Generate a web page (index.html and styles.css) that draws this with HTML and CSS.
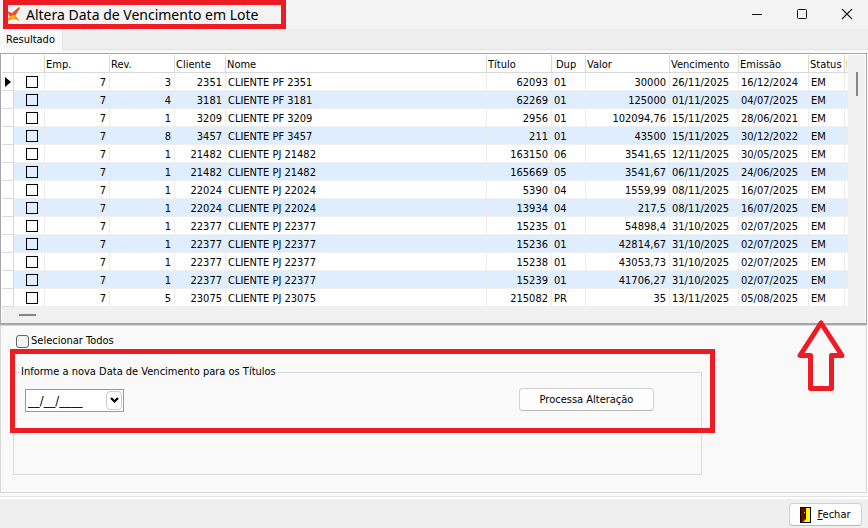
FILE: index.html
```html
<!DOCTYPE html>
<html lang="pt-BR">
<head>
    <meta charset="UTF-8">
    <meta name="viewport" content="width=device-width, initial-scale=1.0">
    <title>Altera Data de Vencimento em Lote</title>
    <link rel="stylesheet" href="styles.css">
</head>
<body>
    <header class="titlebar">
        <svg class="logo" width="15" height="16" viewBox="0 0 15 16" aria-hidden="true">
            <path d="M13 0L14 1L9 9L4 10L1 4L6 6Z" fill="#f04a1d"/>
            <path d="M0 15L4 9L9 8L14 14L8 12L4 13Z" fill="#f7941d"/>
            <path d="M4 9L9 8L9 11L5 12Z" fill="#fdb515"/>
        </svg>
        <h1>Altera Data de Vencimento em Lote</h1>
        <div class="window-buttons">
            <button type="button" aria-label="Minimizar">
                <svg width="12" height="12" viewBox="0 0 12 12"><path d="M1 5.500H11" stroke="#111"/></svg>
            </button>
            <button type="button" aria-label="Maximizar">
                <svg width="12" height="12" viewBox="0 0 12 12"><rect x="1.5" y="0.5" width="9" height="9" rx="1" fill="none" stroke="#111"/></svg>
            </button>
            <button type="button" aria-label="Fechar janela">
                <svg width="12" height="12" viewBox="0 0 12 12"><path d="M1 0L11 10M11 0L1 10" stroke="#111" stroke-width="1.1"/></svg>
            </button>
        </div>
        <div class="mark mark-title"></div>
    </header>

    <nav class="tabs">
        <button type="button" class="tab">Resultado</button>
    </nav>

    <main>
        <section class="grid">
            <div class="grid-body">
                <table>
                    <colgroup>
                        <col class="c-mark"><col class="c-check"><col class="c-num"><col class="c-num"><col class="c-cliente"><col><col class="c-num"><col class="c-dup"><col class="c-valor"><col class="c-venc"><col class="c-emissao"><col class="c-status"><col class="c-last">
                    </colgroup>
                    <thead>
                        <tr><th></th><th></th><th>Emp.</th><th>Rev.</th><th>Cliente</th><th>Nome</th><th>Título</th><th class="th-dup">Dup</th><th>Valor</th><th>Vencimento</th><th>Emissão</th><th>Status</th><th class="cut"></th></tr>
                    </thead>
                    <tbody id="rows"></tbody>
                </table>
                <div class="scroll-v"><div class="thumb"></div></div>
            </div>
            <div class="scroll-h"><div class="thumb"></div></div>
        </section>

        <section class="panel">
            <label class="select-all"><input type="checkbox">Selecionar Todos</label>
            <div class="group">
                <fieldset>
                    <legend>Informe a nova Data de Vencimento para os Títulos</legend>
                    <div class="date-box">
                        <input type="text" value="__/__/____" aria-label="Nova data de vencimento">
                        <button type="button" aria-label="Abrir calendário">
                            <svg width="9" height="7" viewBox="0 0 9 7"><path d="M1 1L4.500 4.500L8 1" fill="none" stroke="#000" stroke-width="2.200"/></svg>
                        </button>
                    </div>
                    <button type="button" class="btn btn-process">Processa Alteração</button>
                </fieldset>
                <div class="mark mark-group"></div>
            </div>
            <svg class="arrow" width="50" height="72" viewBox="0 0 50 72" aria-hidden="true">
                <path d="M25 3L4 35.500H14.500V68.500H35.500V35.500H46Z" fill="none" stroke="#ed1c24" stroke-width="5" stroke-linejoin="round"/>
            </svg>
        </section>
    </main>

    <footer>
        <button type="button" class="btn btn-close">
            <svg width="11" height="16" viewBox="0 0 11 16" aria-hidden="true">
                <rect x=".5" y=".5" width="10" height="15" fill="#ff0" stroke="#000"/>
                <path d="M1 1H5V12L2 15H1Z" fill="#800000"/>
                <path d="M5.500 1V12L2 15.500M3 5.500H5" fill="none" stroke="#000"/>
                <path d="M4 5h1v1H4z" fill="#ff0"/>
            </svg>
            <span><u>F</u>echar</span>
        </button>
    </footer>

    <script>
        const rows = [
            [7, 3, 2351, "CLIENTE PF 2351", 62093, "01", "30000", "26/11/2025", "16/12/2024", "EM"],
            [7, 4, 3181, "CLIENTE PF 3181", 62269, "01", "125000", "01/11/2025", "04/07/2025", "EM"],
            [7, 1, 3209, "CLIENTE PF 3209", 2956, "01", "102094,76", "15/11/2025", "28/06/2021", "EM"],
            [7, 8, 3457, "CLIENTE PF 3457", 211, "01", "43500", "15/11/2025", "30/12/2022", "EM"],
            [7, 1, 21482, "CLIENTE PJ 21482", 163150, "06", "3541,65", "12/11/2025", "30/05/2025", "EM"],
            [7, 1, 21482, "CLIENTE PJ 21482", 165669, "05", "3541,67", "06/11/2025", "24/06/2025", "EM"],
            [7, 1, 22024, "CLIENTE PJ 22024", 5390, "04", "1559,99", "08/11/2025", "16/07/2025", "EM"],
            [7, 1, 22024, "CLIENTE PJ 22024", 13934, "04", "217,5", "08/11/2025", "16/07/2025", "EM"],
            [7, 1, 22377, "CLIENTE PJ 22377", 15235, "01", "54898,4", "31/10/2025", "02/07/2025", "EM"],
            [7, 1, 22377, "CLIENTE PJ 22377", 15236, "01", "42814,67", "31/10/2025", "02/07/2025", "EM"],
            [7, 1, 22377, "CLIENTE PJ 22377", 15238, "01", "43053,73", "31/10/2025", "02/07/2025", "EM"],
            [7, 1, 22377, "CLIENTE PJ 22377", 15239, "01", "41706,27", "31/10/2025", "02/07/2025", "EM"],
            [7, 5, 23075, "CLIENTE PJ 23075", 215082, "PR", "35", "13/11/2025", "05/08/2025", "EM"]
        ];
        // Colunas alinhadas à direita
        const right = [0, 1, 2, 4, 6];

        document.getElementById("rows").innerHTML = rows.map((row, i) => {
            const cells = row.map((v, c) => `<td${right.includes(c) ? ' class="right"' : ''}>${v}</td>`).join("");
            const pointer = i === 0 ? '<div class="pointer"></div>' : '';
            return `<tr><td class="indicator">${pointer}</td><td class="check"><input type="checkbox" aria-label="Selecionar título ${row[4]}"></td>${cells}<td></td></tr>`;
        }).join("");
    </script>
</body>
</html>
```
FILE: styles.css
```css
* {
    box-sizing: border-box;
}

body {
    display: flex;
    flex-direction: column;
    min-height: 100vh;
    margin: 0;
    background-color: #f9f9f9;
    color: #000;
    font-family: "DejaVu Sans Condensed", "DejaVu Sans", sans-serif;
    font-size: 11px;
    line-height: 14px;
}

button,
input {
    margin: 0;
    padding: 0;
    color: inherit;
    font: inherit;
}

svg {
    display: block;
}

/* Title bar */
.titlebar {
    position: relative;
    display: flex;
    align-items: center;
    height: 29px;
    padding-left: 6px;
    background-color: #f3f3f3;
}

.titlebar h1 {
    flex: 1;
    margin: 0 0 0 5px;
    font-family: "Noto Sans", "Open Sans", sans-serif;
    font-size: 14px;
    font-weight: normal;
    line-height: 20px;
}

.window-buttons {
    display: flex;
}

.window-buttons button {
    display: flex;
    align-items: center;
    justify-content: center;
    width: 45px;
    height: 26px;
    border: none;
    background: none;
}

.window-buttons button:last-child {
    width: 42px;
    margin-left: 2px;
}

/* Red highlights */
.mark {
    position: absolute;
    border: 5px solid #ed1c24;
    pointer-events: none;
}

.mark-title {
    top: 0;
    left: 3px;
    width: 283px;
    height: 29px;
}

.mark-group {
    top: -16px;
    right: -13px;
    bottom: 42px;
    left: -3px;
}

/* Tabs */
.tabs {
    display: flex;
    height: 21px;
    background-color: #efefef;
    border-bottom: 1px solid #e3e3e3;
}

.tab {
    height: 21px;
    padding: 0 7px 0 6px;
    border: none;
    border-right: 1px solid #e3e3e3;
    background-color: #f9f9f9;
}

main {
    display: flex;
    flex: 1;
    flex-direction: column;
    padding: 3px 1px 4px 0;
}

/* Grid */
.grid {
    padding: 1px 1px 0;
    border: 1px solid #a5a5aa;
    border-bottom-width: 2px;
    background-color: #fff;
}

.grid-body {
    display: flex;
}

table {
    flex: 1;
    width: 0;
    table-layout: fixed;
    border-collapse: separate;
    border-spacing: 0;
}

.c-mark { width: 12px; }
.c-check { width: 31px; }
.c-num { width: 65px; }
.c-cliente { width: 51px; }
.c-dup { width: 34px; }
.c-valor { width: 84px; }
.c-venc { width: 69px; }
.c-emissao { width: 70px; }
.c-status { width: 36px; }
.c-last { width: 3px; }

th,
td {
    height: 18px;
    padding: 2px 3px 0 2px;
    overflow: hidden;
    border-right: 1px solid #ececec;
    border-bottom: 1px solid #f0f0f0;
    text-align: left;
    white-space: nowrap;
}

th {
    padding: 2px 0 0 1px;
    border-color: #d9d9d9;
    font-weight: normal;
}

.th-dup {
    padding-left: 4px;
}

th:last-child,
td:last-child {
    padding: 0;
    border-right: none;
}

.cut::before {
    content: "";
    display: block;
    width: 1px;
    height: 8px;
    margin-left: 1px;
    background-color: #ffd27a;
}

tbody tr:nth-child(even) td {
    background-color: #deeeff;
}

tbody tr .indicator,
tbody tr:nth-child(even) .indicator {
    padding: 0 0 0 3px;
    border-color: #d9d9d9;
    background-color: #fff;
}

.pointer {
    width: 0;
    border: 5px solid transparent;
    border-right: none;
    border-left: 6px solid #000;
}

td.right {
    text-align: right;
}

td.check {
    padding: 0;
}

.check input {
    display: block;
    width: 12px;
    height: 12px;
    margin-left: 12px;
    border: 1px solid #000;
    appearance: none;
}

.scroll-v {
    width: 17px;
    padding: 17px 0 0 8px;
    background-color: #f0f0f0;
}

.scroll-v .thumb {
    width: 2px;
    height: 24px;
    background-color: #858585;
}

.scroll-h {
    height: 16px;
    padding: 7px 0 0 17px;
    background-color: #f0f0f0;
}

.scroll-h .thumb {
    width: 17px;
    height: 2px;
    background-color: #858585;
}

/* Lower panel */
.panel {
    position: relative;
    flex: 1;
    padding: 8px 164px 17px 12px;
    border: 1px solid #d9d9d9;
}

.select-all {
    display: flex;
    align-items: center;
    gap: 2px;
    width: max-content;
    margin-left: 3px;
}

.select-all input {
    width: 13px;
    height: 13px;
    border: 1px solid #666;
    border-radius: 3px;
    background-color: #f3f3f3;
    appearance: none;
}

.select-all input:checked,
.check input:checked {
    background-color: #333;
}

.group {
    position: relative;
    margin-top: 17px;
}

fieldset {
    display: flex;
    align-items: flex-start;
    justify-content: space-between;
    min-width: 0;
    height: 110px;
    margin: 0;
    padding: 9px 47px 0 11px;
    border: 1px solid #d9d9d9;
}

legend {
    margin-left: -5px;
    padding: 0 1px;
}

.date-box {
    display: flex;
    align-items: center;
    width: 99px;
    height: 23px;
    margin-top: 1px;
    padding: 0 1px 0 2px;
    border: 1px solid #999;
    background-color: #fff;
}

.date-box input {
    flex: 1;
    width: 0;
    border: none;
    outline: none;
    background: none;
    font-size: 13px;
}

.date-box button {
    display: flex;
    align-items: center;
    justify-content: center;
    width: 16px;
    height: 19px;
    border: 1px solid #ccc;
    border-radius: 4px;
    background-color: #fdfdfd;
}

.btn {
    border: 1px solid #d0d0d0;
    border-bottom-color: #b9b9b9;
    border-radius: 4px;
    background-color: #fdfdfd;
}

.btn-process {
    width: 135px;
    height: 23px;
}

.arrow {
    position: absolute;
    top: -6px;
    right: 20px;
}

/* Footer */
footer {
    display: flex;
    justify-content: flex-end;
    padding: 4px 6px 2px 0;
    border-top: 2px solid #fff;
    background-color: #efefef;
    box-shadow: 0 -1px #e3e3e3;
}

.btn-close {
    display: flex;
    align-items: center;
    justify-content: center;
    gap: 6px;
    width: 73px;
    height: 23px;
    font-size: 11px;
}
```
